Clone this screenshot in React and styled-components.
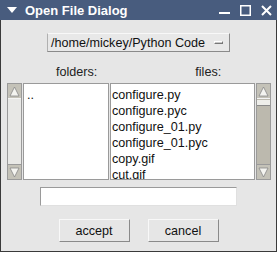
import React from "react";
import styled, { createGlobalStyle } from "styled-components";

const files = ["configure.py", "configure.pyc", "configure_01.py", "configure_01.pyc", "copy.gif", "cut.gif"];

export default function App() {
  return (
    <>
      <Global />
      <Window>
        <TitleBar>
          <svg width="10" height="7" viewBox="0 0 10 7">
            <polygon points="0,0 10,0 5,6" fill="#fff" />
          </svg>
          <Title>Open File Dialog</Title>
          <Controls>
            <svg width="11" height="11" viewBox="0 0 11 11">
              <rect x="0" y="7" width="11" height="2" fill="#fff" />
            </svg>
            <svg width="11" height="11" viewBox="0 0 11 11">
              <rect x="0.75" y="0.75" width="9.5" height="9.5" fill="none" stroke="#fff" strokeWidth="1.5" />
            </svg>
            <svg width="11" height="11" viewBox="0 0 11 11">
              <path d="M1 1 L10 10 M10 1 L1 10" stroke="#fff" strokeWidth="2" />
            </svg>
          </Controls>
        </TitleBar>
        <Body>
          <Dropdown>
            <span>/home/mickey/Python Code</span>
            <Indicator />
          </Dropdown>
          <Labels>
            <Label $left={55}>folders:</Label>
            <Label $left={98}>files:</Label>
          </Labels>
          <Lists>
            <Scrollbar $full>
              <Arrow><svg width="11" height="11" viewBox="0 0 11 11"><polygon points="5.5,1 10,10 1,10" fill="#f4f4f0" stroke="#888" strokeWidth="0.8" /></svg></Arrow>
              <Trough $full />
              <Arrow><svg width="11" height="11" viewBox="0 0 11 11"><polygon points="1,1 10,1 5.5,10" fill="#f4f4f0" stroke="#888" strokeWidth="0.8" /></svg></Arrow>
            </Scrollbar>
            <ListBox $width={86}>
              <Row $indent={3}>..</Row>
            </ListBox>
            <ListBox $width={145}>
              {files.map((f) => (
                <Row key={f}>{f}</Row>
              ))}
            </ListBox>
            <Scrollbar>
              <Arrow><svg width="11" height="11" viewBox="0 0 11 11"><polygon points="5.5,1 10,10 1,10" fill="#f4f4f0" stroke="#888" strokeWidth="0.8" /></svg></Arrow>
              <Trough>
                <Thumb />
              </Trough>
              <Arrow><svg width="11" height="11" viewBox="0 0 11 11"><polygon points="1,1 10,1 5.5,10" fill="#f4f4f0" stroke="#888" strokeWidth="0.8" /></svg></Arrow>
            </Scrollbar>
          </Lists>
          <Entry />
          <Buttons>
            <Button>accept</Button>
            <Button>cancel</Button>
          </Buttons>
        </Body>
      </Window>
    </>
  );
}

const Global = createGlobalStyle`
  body {
    margin: 0;
    background: #ffffff;
    font-family: "Liberation Sans", Arial, sans-serif;
  }
`;

const Window = styled.div`
  width: 277px;
  box-sizing: border-box;
  border: 1px solid #3a3a3a;
  border-top: none;
  background: #e6e6e6;
  display: flex;
  flex-direction: column;
`;

const TitleBar = styled.div`
  height: 20px;
  margin: 0 -1px;
  background: #485c7e;
  display: flex;
  align-items: center;
  padding-left: 7px;
  gap: 8px;
`;

const Title = styled.span`
  color: #fff;
  font-family: "Liberation Sans", Arial, sans-serif;
  font-weight: bold;
  font-size: 13px;
  flex: 1;
`;

const Controls = styled.div`
  display: flex;
  gap: 10px;
  padding-right: 5px;
  padding-top: 1px;
`;

const Body = styled.div`
  height: 231px;
  display: flex;
  flex-direction: column;
  align-items: center;
  padding-top: 13px;
  box-sizing: border-box;
`;

const Dropdown = styled.div`
  width: 183px;
  height: 19px;
  box-sizing: border-box;
  border: 1px solid;
  border-color: #f8f8f8 #8a8a8a #8a8a8a #b0b0b0;
  background: #e8e8e8;
  display: flex;
  align-items: center;
  padding-left: 3px;
  font-size: 12.6px;
  color: #111;
`;

const Indicator = styled.div`
  width: 9px;
  height: 3px;
  margin-left: 9px;
  background: #c8c8c8;
  border: 1px solid;
  border-color: #fff #777 #777 #fff;
  box-sizing: border-box;
`;

const Labels = styled.div`
  align-self: stretch;
  display: flex;
  height: 16px;
  margin-top: 13px;
`;

const Label = styled.span`
  margin-left: ${(p) => p.$left}px;
  font-size: 12.6px;
  color: #222;
`;

const Lists = styled.div`
  align-self: stretch;
  display: flex;
  margin-top: 2px;
  padding-left: 6px;
  height: 97px;
  gap: 1px;
`;

const Scrollbar = styled.div`
  width: 15px;
  box-sizing: border-box;
  border: 1px solid #9a9a9a;
  display: flex;
  flex-direction: column;
  background: ${(p) => (p.$full ? "#e4e4e4" : "#bcb9ae")};
`;

const Arrow = styled.div`
  height: 14px;
  background: #c4c2b8;
  display: flex;
  align-items: center;
  justify-content: center;
`;

const Trough = styled.div`
  flex: 1;
  background: ${(p) => (p.$full ? "#e8e8e6" : "#bcb9ae")};
  border-top: 1px solid #f4f4f4;
  border-bottom: 1px solid #9a9a9a;
`;

const Thumb = styled.div`
  margin-top: 1px;
  height: 5px;
  background: #eeeeea;
  border-bottom: 1px solid #8a8a8a;
`;

const ListBox = styled.div`
  width: ${(p) => p.$width}px;
  box-sizing: border-box;
  border: 1px solid #9a9a9a;
  background: #fff;
  padding-top: 3px;
  overflow: hidden;
`;

const Row = styled.div`
  height: 16px;
  line-height: 16px;
  padding-left: ${(p) => p.$indent ?? 1}px;
  font-size: 12.6px;
  color: #111;
  white-space: nowrap;
`;

const Entry = styled.div`
  width: 197px;
  height: 19px;
  box-sizing: border-box;
  margin-top: 7px;
  border: 1px solid;
  border-color: #9a9a9a #e0e0e0 #e0e0e0 #9a9a9a;
  background: #fff;
`;

const Buttons = styled.div`
  display: flex;
  gap: 18px;
  margin-top: 13px;
`;

const Button = styled.button`
  width: 71px;
  height: 23px;
  padding: 0;
  box-sizing: border-box;
  border: 1px solid;
  border-color: #f8f8f8 #8a8a8a #8a8a8a #f8f8f8;
  background: #e6e6e6;
  font-family: "Liberation Sans", Arial, sans-serif;
  font-size: 12.6px;
  color: #111;
`;
